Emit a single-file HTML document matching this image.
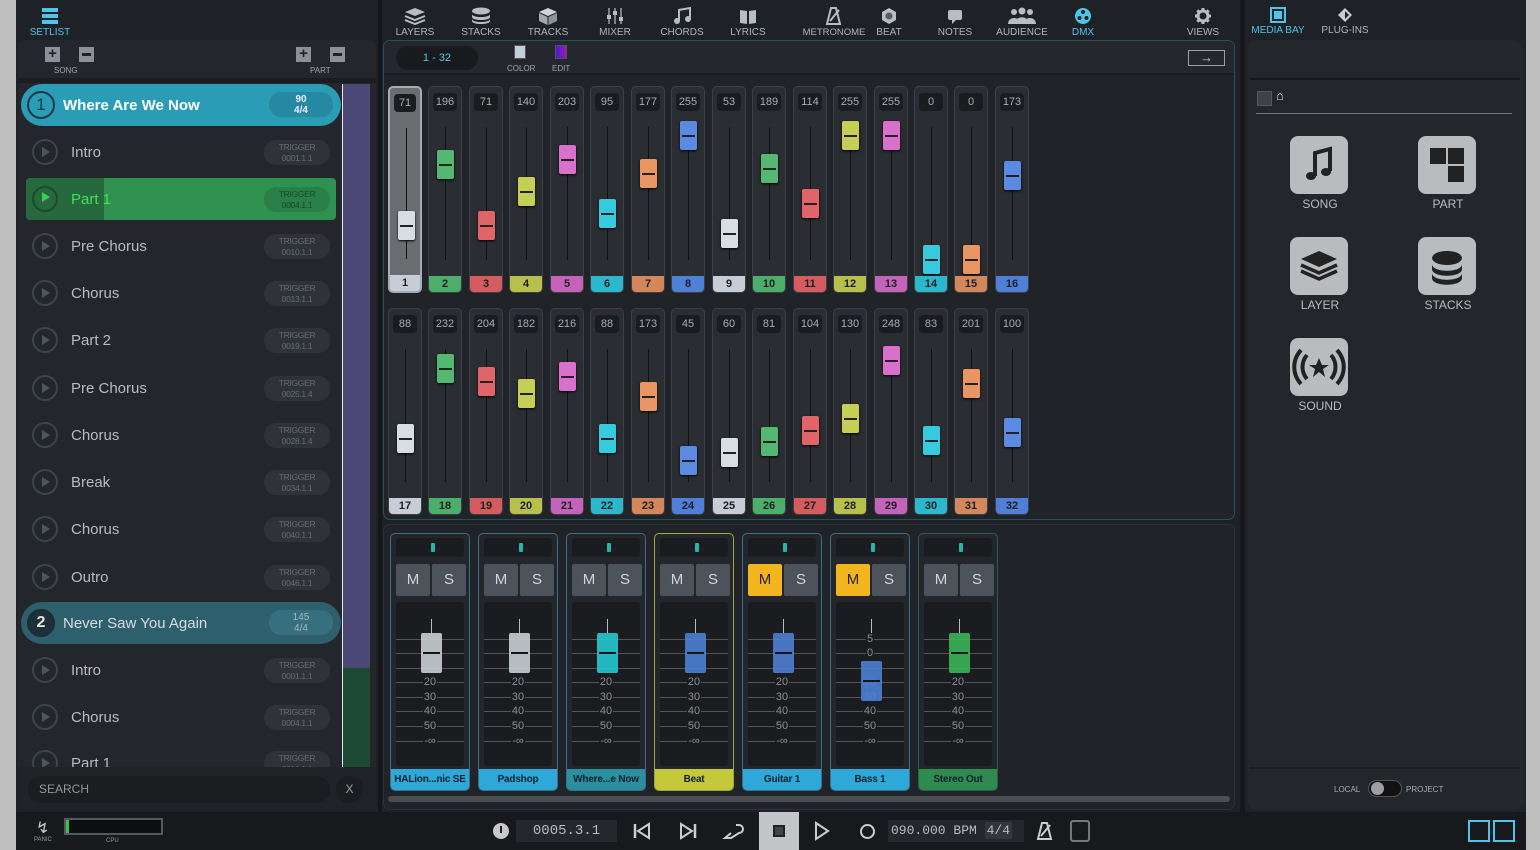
<!DOCTYPE html>
<html><head><meta charset="utf-8"><style>
*{box-sizing:border-box;margin:0;padding:0}
body{width:1540px;height:850px;overflow:hidden;background:#bfbfbf;font-family:"Liberation Sans",sans-serif;position:relative}
.a{position:absolute}
#app{left:16px;top:0;width:1510px;height:850px;background:#1e2125}
.tb{color:#aeb4ba;font-size:10px;text-align:center;width:60px}
.tb svg{display:block;margin:7px auto 2px}
.s{position:absolute;width:34px;height:207px;border-radius:5px;background:#2a2d31;border:1px solid #3d4147;overflow:hidden}
.s .v{position:absolute;left:4px;right:4px;top:6px;height:18px;background:#1a1c1f;border-radius:4px;color:#a8adb2;font-size:11px;text-align:center;line-height:18px}
.s .t{position:absolute;left:16px;width:1px;top:40px;bottom:32px;background:#111}
.s .h{position:absolute;left:8px;width:17px;height:29px;border-radius:2px;box-shadow:0 1px 2px #000}
.s .h:after{content:"";position:absolute;left:2px;right:2px;top:14px;height:2px;background:#222}
.s .l{position:absolute;left:0;right:0;bottom:0;height:16px;font-size:11px;font-weight:bold;color:#1d1f22;text-align:center;line-height:16px}
.ch{position:absolute;top:533px;width:80px;height:258px;border-radius:5px;border:1px solid #3a6e8a;background:#23272b;overflow:hidden}
.ch .mt{position:absolute;left:5px;right:5px;top:4px;height:19px;background:#1a1c1f;border-radius:3px}
.ch .mt:after{content:"";position:absolute;left:35px;top:5px;width:4px;height:9px;background:#27b3a6;border-radius:1px}
.ch .m,.ch .so{position:absolute;top:30px;width:34px;height:32px;background:#4c535b;color:#d0d4d8;font-size:15px;text-align:center;line-height:32px;border-radius:2px}
.ch .m{left:5px}.ch .so{left:41px}
.ch .fa{position:absolute;left:5px;right:5px;top:68px;height:164px;background:#1a1c1f;border-radius:3px}
.ch .tk{position:absolute;left:5px;right:5px;height:1px;background:#555}
.ch .n{position:absolute;left:10px;right:10px;height:12px;text-align:center;font-size:11px;color:#8a8f94;line-height:12px}
.ch .n span{background:#1a1c1f;padding:0 1px}
.ch .fh{position:absolute;left:30px;width:21px;height:40px;border-radius:2px;opacity:.9}
.ch .fh:after{content:"";position:absolute;left:2px;right:2px;top:19px;height:2px;background:#111}
.ch .st{position:absolute;left:40px;width:1px;height:14px;background:#bbb}
.ch .lb{position:absolute;left:0;right:0;bottom:0;height:21px;background:#2ea8d8;color:#10202a;font-size:10px;font-weight:bold;text-align:center;line-height:21px;white-space:nowrap;letter-spacing:-.2px}
.row{position:absolute;left:26px;width:310px;height:42px}
.row .pl{position:absolute;left:6px;top:8px;width:26px;height:26px;border:2px solid #3e444a;border-radius:50%}
.row .pl:after{content:"";position:absolute;left:8px;top:6px;border-left:8px solid #4e555c;border-top:5px solid transparent;border-bottom:5px solid transparent}
.row .nm{position:absolute;left:45px;top:13px;font-size:15px;color:#b7bcc1}
.row .tg{position:absolute;right:6px;top:9px;width:66px;height:25px;background:#2f3337;border-radius:12px;color:#666c72;font-size:8.5px;text-align:center;line-height:11px;padding-top:2px;letter-spacing:-.3px}
.mb{position:absolute;width:58px;height:58px;background:#b9bcbf;border-radius:8px}
.mbl{position:absolute;width:100px;text-align:center;color:#b8bcc0;font-size:12px}
</style></head><body>
<div id="app" class="a">
<div class="a" style="left:0;top:0;width:1510px;height:40px;background:#1e2125"></div>
<div class="a" style="left:362px;top:0;width:4px;height:812px;background:#141619"></div>
<div class="a" style="left:1224px;top:0;width:5px;height:812px;background:#141619"></div>

<div class="a tb" style="left:4px;top:0;color:#4fc3e8"><svg width="18" height="18" viewBox="0 0 18 18"><rect x="1" y="1" width="16" height="4" fill="#4fc3e8"/><rect x="1" y="7" width="16" height="4" fill="#4fc3e8"/><rect x="1" y="13" width="16" height="4" fill="#4fc3e8"/></svg>SETLIST</div>

<div class="a" style="left:2px;top:40px;width:358px;height:770px;background:#23262a;border-radius:6px"></div>
<div class="a" style="left:29px;top:47px;width:15px;height:15px;background:#8d9196;color:#222;font-weight:bold;font-size:15px;line-height:14px;text-align:center">+</div>
<div class="a" style="left:63px;top:47px;width:15px;height:15px;background:#8d9196"><div class="a" style="left:3px;top:6px;width:9px;height:3px;background:#222"></div></div>
<div class="a" style="left:38px;top:66px;font-size:8px;color:#a0a5aa">SONG</div>
<div class="a" style="left:280px;top:47px;width:15px;height:15px;background:#8d9196;color:#222;font-weight:bold;font-size:15px;line-height:14px;text-align:center">+</div>
<div class="a" style="left:314px;top:47px;width:15px;height:15px;background:#8d9196"><div class="a" style="left:3px;top:6px;width:9px;height:3px;background:#222"></div></div>
<div class="a" style="left:294px;top:66px;font-size:8px;color:#a0a5aa">PART</div>
<div class="a" style="left:2px;top:78px;width:358px;height:5px;background:#1b1d20"></div>
<div class="a" style="left:326px;top:84px;width:1px;height:683px;background:#e8e8e8"></div>
<div class="a" style="left:327px;top:84px;width:27px;height:584px;background:#4b4875"></div>
<div class="a" style="left:327px;top:668px;width:27px;height:99px;background:#1c4a33"></div>

<div class="a" style="left:5px;top:84px;width:320px;height:42px;background:#2a9cb6;border-radius:21px"></div>
<div class="a" style="left:11px;top:91px;width:28px;height:28px;border:2px solid #17394a;border-radius:50%;color:#17394a;font-size:17px;text-align:center;line-height:24px">1</div>
<div class="a" style="left:47px;top:97px;font-size:15px;font-weight:bold;color:#fff">Where Are We Now</div>
<div class="a" style="left:253px;top:92px;width:64px;height:25px;background:#2689a1;border-radius:12px;color:#eef;font-size:10px;text-align:center;line-height:11px;padding-top:2px;font-weight:bold">90<br>4/4</div>

<div class="row" style="left:10px;top:131px"><div class="pl"></div><div class="nm">Intro</div><div class="tg">TRIGGER<br>0001.1.1</div></div>
<div class="a" style="left:10px;top:178px;width:310px;height:42px;background:#2f9150;border-radius:4px"></div>
<div class="a" style="left:10px;top:178px;width:78px;height:42px;background:#26693d;border-radius:4px 0 0 4px"></div>
<div class="row" style="left:10px;top:178px"><div class="pl" style="border-color:#1d4a2c"></div><div class="a" style="left:16px;top:14px;border-left:8px solid #35d04f;border-top:5px solid transparent;border-bottom:5px solid transparent"></div><div class="nm" style="color:#3fe05a">Part 1</div><div class="tg" style="background:#2a7f47;color:#174a28">TRIGGER<br>0004.1.1</div></div>
<div class="row" style="left:10px;top:225px"><div class="pl"></div><div class="nm">Pre Chorus</div><div class="tg">TRIGGER<br>0010.1.1</div></div>
<div class="row" style="left:10px;top:272px"><div class="pl"></div><div class="nm">Chorus</div><div class="tg">TRIGGER<br>0013.1.1</div></div>
<div class="row" style="left:10px;top:319px"><div class="pl"></div><div class="nm">Part 2</div><div class="tg">TRIGGER<br>0019.1.1</div></div>
<div class="row" style="left:10px;top:367px"><div class="pl"></div><div class="nm">Pre Chorus</div><div class="tg">TRIGGER<br>0025.1.4</div></div>
<div class="row" style="left:10px;top:414px"><div class="pl"></div><div class="nm">Chorus</div><div class="tg">TRIGGER<br>0028.1.4</div></div>
<div class="row" style="left:10px;top:461px"><div class="pl"></div><div class="nm">Break</div><div class="tg">TRIGGER<br>0034.1.1</div></div>
<div class="row" style="left:10px;top:508px"><div class="pl"></div><div class="nm">Chorus</div><div class="tg">TRIGGER<br>0040.1.1</div></div>
<div class="row" style="left:10px;top:556px"><div class="pl"></div><div class="nm">Outro</div><div class="tg">TRIGGER<br>0046.1.1</div></div>
<div class="a" style="left:5px;top:602px;width:320px;height:42px;background:#2e5f6c;border-radius:21px"></div>
<div class="a" style="left:11px;top:609px;width:28px;height:28px;border:2px solid #1a2c33;background:#1f3038;border-radius:50%;color:#e6e6e6;font-size:16px;text-align:center;line-height:24px;font-weight:bold">2</div>
<div class="a" style="left:47px;top:615px;font-size:15px;color:#d6dde0">Never Saw You Again</div>
<div class="a" style="left:253px;top:610px;width:64px;height:25px;background:#36707e;border-radius:12px;color:#9fb8bf;font-size:10px;text-align:center;line-height:11px;padding-top:2px">145<br>4/4</div>
<div class="row" style="left:10px;top:649px"><div class="pl"></div><div class="nm">Intro</div><div class="tg">TRIGGER<br>0001.1.1</div></div>
<div class="row" style="left:10px;top:696px"><div class="pl"></div><div class="nm">Chorus</div><div class="tg">TRIGGER<br>0004.1.1</div></div>
<div class="a" style="left:10px;top:742px;width:316px;height:25px;overflow:hidden"><div class="row" style="left:0;top:0"><div class="pl"></div><div class="nm">Part 1</div><div class="tg">TRIGGER<br>0010.1.1</div></div></div>
<div class="a" style="left:2px;top:767px;width:358px;height:43px;background:#202327"></div>
<div class="a" style="left:12px;top:776px;width:302px;height:27px;background:#1b1d20;border-radius:13px;color:#8f959b;font-size:12px;line-height:27px;padding-left:11px">SEARCH</div>
<div class="a" style="left:320px;top:776px;width:27px;height:27px;background:#1b1d20;border-radius:13px;color:#9aa0a6;font-size:12px;line-height:27px;text-align:center">X</div>

<div class="a tb" style="left:369px;top:0"><svg width="22" height="18" viewBox="0 0 22 18"><path d="M11 1 21 5 11 9 1 5Z" fill="#b8bdc2"/><path d="M1 9l10 4 10-4M1 13l10 4 10-4" stroke="#b8bdc2" stroke-width="2" fill="none"/></svg>LAYERS</div>
<div class="a tb" style="left:435px;top:0"><svg width="20" height="18" viewBox="0 0 20 18"><ellipse cx="10" cy="4" rx="9" ry="3.5" fill="#b8bdc2"/><path d="M1 7c0 4 18 4 18 0v3c0 4-18 4-18 0zM1 12c0 4 18 4 18 0v2c0 4-18 4-18 0z" fill="#b8bdc2"/></svg>STACKS</div>
<div class="a tb" style="left:502px;top:0"><svg width="20" height="18" viewBox="0 0 20 18"><path d="M10 1 19 5 10 9 1 5Z" fill="#d0d3d6"/><path d="M1 6 9.5 10V18L1 14Z" fill="#a3a8ad"/><path d="M19 6 10.5 10V18L19 14Z" fill="#8d9297"/></svg>TRACKS</div>
<div class="a tb" style="left:569px;top:0"><svg width="20" height="18" viewBox="0 0 20 18"><path d="M4 1v16M10 1v16M16 1v16" stroke="#9ea3a8" stroke-width="1.5"/><rect x="2" y="8" width="4" height="4" fill="#b8bdc2"/><rect x="8" y="4" width="4" height="4" fill="#b8bdc2"/><rect x="14" y="10" width="4" height="4" fill="#b8bdc2"/></svg>MIXER</div>
<div class="a tb" style="left:636px;top:0"><svg width="20" height="18" viewBox="0 0 20 18"><path d="M7 14V3l11-2v11" stroke="#b8bdc2" stroke-width="2" fill="none"/><circle cx="5" cy="14" r="3" fill="#b8bdc2"/><circle cx="16" cy="12" r="3" fill="#b8bdc2"/></svg>CHORDS</div>
<div class="a tb" style="left:702px;top:0"><svg width="20" height="18" viewBox="0 0 20 18"><path d="M2 3l7 1v13l-7-1zM18 3l-7 1v13l7-1z" fill="#b8bdc2"/></svg>LYRICS</div>
<div class="a tb" style="left:776px;top:0;width:84px;font-size:9.5px"><svg width="20" height="18" viewBox="0 0 20 18"><path d="M7 1h5l4 16H3z" stroke="#b8bdc2" stroke-width="2" fill="none"/><path d="M6 14 15 3" stroke="#b8bdc2" stroke-width="2"/></svg>METRONOME</div>
<div class="a tb" style="left:843px;top:0"><svg width="20" height="18" viewBox="0 0 20 18"><path d="M10 1 17 5v8l-7 4-7-4V5z" fill="#b8bdc2"/><circle cx="10" cy="9" r="3.5" fill="#5a5f64"/></svg>BEAT</div>
<div class="a tb" style="left:909px;top:0"><svg width="20" height="18" viewBox="0 0 20 18"><rect x="3" y="3" width="14" height="10" rx="2" fill="#b8bdc2"/><path d="M7 13v4l4-4z" fill="#b8bdc2"/></svg>NOTES</div>
<div class="a tb" style="left:976px;top:0"><svg width="32" height="18" viewBox="0 0 32 18"><circle cx="8" cy="5" r="3" fill="#b8bdc2"/><circle cx="16" cy="4" r="3.5" fill="#b8bdc2"/><circle cx="24" cy="5" r="3" fill="#b8bdc2"/><path d="M2 17c0-8 12-8 12 0zM9 17c0-9 14-9 14 0zM18 17c0-8 12-8 12 0z" fill="#b8bdc2"/></svg>AUDIENCE</div>
<div class="a tb" style="left:1037px;top:0;color:#4fc3e8"><svg width="18" height="18" viewBox="0 0 18 18"><circle cx="9" cy="9" r="8" fill="#4fc3e8"/><circle cx="9" cy="5" r="2" fill="#1e2125"/><circle cx="5.5" cy="11" r="2" fill="#1e2125"/><circle cx="12.5" cy="11" r="2" fill="#1e2125"/></svg>DMX</div>
<div class="a tb" style="left:1157px;top:0"><svg width="18" height="18" viewBox="0 0 18 18"><circle cx="9" cy="9" r="5" stroke="#b8bdc2" stroke-width="3" fill="none"/><path d="M9 1v4M9 13v4M1 9h4M13 9h4M3.3 3.3l2.8 2.8M11.9 11.9l2.8 2.8M3.3 14.7l2.8-2.8M11.9 6.1l2.8-2.8" stroke="#b8bdc2" stroke-width="3"/></svg>VIEWS</div>

<div class="a" style="left:367px;top:40px;width:852px;height:480px;border:1px solid #25515e;border-radius:7px;background:#202327"></div>
<div class="a" style="left:368px;top:41px;width:850px;height:34px;background:#24272b;border-radius:7px 7px 0 0;border-bottom:2px solid #1a1c1f"></div>
<div class="a" style="left:380px;top:46px;width:82px;height:24px;background:#181a1d;border-radius:12px;color:#4fc3e8;font-size:11px;text-align:center;line-height:24px">1 - 32</div>
<div class="a" style="left:498px;top:45px;width:12px;height:14px;background:#c2d0dc;border:1px solid #555"></div>
<div class="a" style="left:491px;top:64px;font-size:8px;color:#a0a5aa">COLOR</div>
<div class="a" style="left:539px;top:45px;width:12px;height:14px;background:linear-gradient(90deg,#4a1ad0,#9b18b8);border:1px solid #555"></div>
<div class="a" style="left:536px;top:64px;font-size:8px;color:#a0a5aa">EDIT</div>
<div class="a" style="left:1172px;top:50px;width:37px;height:16px;border:1px solid #9aa0a6;color:#d0d0d0;font-size:13px;text-align:center;line-height:13px">&#8594;</div>

<div class="s" style="left:372px;top:86px;background:#6a6c6f;border:2px solid #a8acb0"><div class="v">71</div><div class="t"></div><div class="h" style="top:123px;background:#d6dde3"></div><div class="l" style="background:#c5ced6">1</div></div>
<div class="s" style="left:412px;top:86px"><div class="v">196</div><div class="t"></div><div class="h" style="top:63px;background:#54b872"></div><div class="l" style="background:#4dae6b">2</div></div>
<div class="s" style="left:453px;top:86px"><div class="v">71</div><div class="t"></div><div class="h" style="top:124px;background:#e06468"></div><div class="l" style="background:#d45b5e">3</div></div>
<div class="s" style="left:493px;top:86px"><div class="v">140</div><div class="t"></div><div class="h" style="top:90px;background:#c5cf55"></div><div class="l" style="background:#b7c04c">4</div></div>
<div class="s" style="left:534px;top:86px"><div class="v">203</div><div class="t"></div><div class="h" style="top:58px;background:#d970cb"></div><div class="l" style="background:#c463b9">5</div></div>
<div class="s" style="left:574px;top:86px"><div class="v">95</div><div class="t"></div><div class="h" style="top:112px;background:#35cbdc"></div><div class="l" style="background:#2bb8cc">6</div></div>
<div class="s" style="left:615px;top:86px"><div class="v">177</div><div class="t"></div><div class="h" style="top:72px;background:#e99463"></div><div class="l" style="background:#d4875a">7</div></div>
<div class="s" style="left:655px;top:86px"><div class="v">255</div><div class="t"></div><div class="h" style="top:34px;background:#5b8ae2"></div><div class="l" style="background:#4f7fd6">8</div></div>
<div class="s" style="left:696px;top:86px"><div class="v">53</div><div class="t"></div><div class="h" style="top:132px;background:#d6dde3"></div><div class="l" style="background:#c5ced6">9</div></div>
<div class="s" style="left:736px;top:86px"><div class="v">189</div><div class="t"></div><div class="h" style="top:67px;background:#54b872"></div><div class="l" style="background:#4dae6b">10</div></div>
<div class="s" style="left:777px;top:86px"><div class="v">114</div><div class="t"></div><div class="h" style="top:102px;background:#e06468"></div><div class="l" style="background:#d45b5e">11</div></div>
<div class="s" style="left:817px;top:86px"><div class="v">255</div><div class="t"></div><div class="h" style="top:34px;background:#c5cf55"></div><div class="l" style="background:#b7c04c">12</div></div>
<div class="s" style="left:858px;top:86px"><div class="v">255</div><div class="t"></div><div class="h" style="top:34px;background:#d970cb"></div><div class="l" style="background:#c463b9">13</div></div>
<div class="s" style="left:898px;top:86px"><div class="v">0</div><div class="t"></div><div class="h" style="top:158px;background:#35cbdc"></div><div class="l" style="background:#2bb8cc">14</div></div>
<div class="s" style="left:938px;top:86px"><div class="v">0</div><div class="t"></div><div class="h" style="top:158px;background:#e99463"></div><div class="l" style="background:#d4875a">15</div></div>
<div class="s" style="left:979px;top:86px"><div class="v">173</div><div class="t"></div><div class="h" style="top:74px;background:#5b8ae2"></div><div class="l" style="background:#4f7fd6">16</div></div>
<div class="s" style="left:372px;top:308px"><div class="v">88</div><div class="t"></div><div class="h" style="top:115px;background:#d6dde3"></div><div class="l" style="background:#c5ced6">17</div></div>
<div class="s" style="left:412px;top:308px"><div class="v">232</div><div class="t"></div><div class="h" style="top:45px;background:#54b872"></div><div class="l" style="background:#4dae6b">18</div></div>
<div class="s" style="left:453px;top:308px"><div class="v">204</div><div class="t"></div><div class="h" style="top:58px;background:#e06468"></div><div class="l" style="background:#d45b5e">19</div></div>
<div class="s" style="left:493px;top:308px"><div class="v">182</div><div class="t"></div><div class="h" style="top:70px;background:#c5cf55"></div><div class="l" style="background:#b7c04c">20</div></div>
<div class="s" style="left:534px;top:308px"><div class="v">216</div><div class="t"></div><div class="h" style="top:53px;background:#d970cb"></div><div class="l" style="background:#c463b9">21</div></div>
<div class="s" style="left:574px;top:308px"><div class="v">88</div><div class="t"></div><div class="h" style="top:115px;background:#35cbdc"></div><div class="l" style="background:#2bb8cc">22</div></div>
<div class="s" style="left:615px;top:308px"><div class="v">173</div><div class="t"></div><div class="h" style="top:73px;background:#e99463"></div><div class="l" style="background:#d4875a">23</div></div>
<div class="s" style="left:655px;top:308px"><div class="v">45</div><div class="t"></div><div class="h" style="top:137px;background:#5b8ae2"></div><div class="l" style="background:#4f7fd6">24</div></div>
<div class="s" style="left:696px;top:308px"><div class="v">60</div><div class="t"></div><div class="h" style="top:129px;background:#d6dde3"></div><div class="l" style="background:#c5ced6">25</div></div>
<div class="s" style="left:736px;top:308px"><div class="v">81</div><div class="t"></div><div class="h" style="top:118px;background:#54b872"></div><div class="l" style="background:#4dae6b">26</div></div>
<div class="s" style="left:777px;top:308px"><div class="v">104</div><div class="t"></div><div class="h" style="top:107px;background:#e06468"></div><div class="l" style="background:#d45b5e">27</div></div>
<div class="s" style="left:817px;top:308px"><div class="v">130</div><div class="t"></div><div class="h" style="top:95px;background:#c5cf55"></div><div class="l" style="background:#b7c04c">28</div></div>
<div class="s" style="left:858px;top:308px"><div class="v">248</div><div class="t"></div><div class="h" style="top:37px;background:#d970cb"></div><div class="l" style="background:#c463b9">29</div></div>
<div class="s" style="left:898px;top:308px"><div class="v">83</div><div class="t"></div><div class="h" style="top:117px;background:#35cbdc"></div><div class="l" style="background:#2bb8cc">30</div></div>
<div class="s" style="left:938px;top:308px"><div class="v">201</div><div class="t"></div><div class="h" style="top:60px;background:#e99463"></div><div class="l" style="background:#d4875a">31</div></div>
<div class="s" style="left:979px;top:308px"><div class="v">100</div><div class="t"></div><div class="h" style="top:109px;background:#5b8ae2"></div><div class="l" style="background:#4f7fd6">32</div></div>

<div class="a" style="left:367px;top:524px;width:852px;height:286px;border:1px solid #2d3237;border-radius:7px;background:#202327"></div>
<div class="a" style="left:372px;top:796px;width:842px;height:6px;background:#4a4e53;border-radius:3px"></div>

<div class="ch" style="left:374px"><div class="mt"></div><div class="m">M</div><div class="so">S</div><div class="fa"></div>
<div class="tk" style="top:105px"></div><div class="tk" style="top:119px"></div><div class="tk" style="top:134px"></div><div class="tk" style="top:148px"></div><div class="tk" style="top:163px"></div><div class="tk" style="top:177px"></div><div class="tk" style="top:192px"></div><div class="tk" style="top:207px"></div>
<div class="n" style="top:142px"><span>20</span></div><div class="n" style="top:157px"><span>30</span></div><div class="n" style="top:171px"><span>40</span></div><div class="n" style="top:186px"><span>50</span></div><div class="n" style="top:201px"><span>-∞</span></div>
<div class="st" style="top:85px"></div><div class="fh" style="top:99px;background:#c9ced2"></div><div class="lb">HALion...nic SE</div></div>
<div class="ch" style="left:462px"><div class="mt"></div><div class="m">M</div><div class="so">S</div><div class="fa"></div>
<div class="tk" style="top:105px"></div><div class="tk" style="top:119px"></div><div class="tk" style="top:134px"></div><div class="tk" style="top:148px"></div><div class="tk" style="top:163px"></div><div class="tk" style="top:177px"></div><div class="tk" style="top:192px"></div><div class="tk" style="top:207px"></div>
<div class="n" style="top:142px"><span>20</span></div><div class="n" style="top:157px"><span>30</span></div><div class="n" style="top:171px"><span>40</span></div><div class="n" style="top:186px"><span>50</span></div><div class="n" style="top:201px"><span>-∞</span></div>
<div class="st" style="top:85px"></div><div class="fh" style="top:99px;background:#c9ced2"></div><div class="lb">Padshop</div></div>
<div class="ch" style="left:550px"><div class="mt"></div><div class="m">M</div><div class="so">S</div><div class="fa"></div>
<div class="tk" style="top:105px"></div><div class="tk" style="top:119px"></div><div class="tk" style="top:134px"></div><div class="tk" style="top:148px"></div><div class="tk" style="top:163px"></div><div class="tk" style="top:177px"></div><div class="tk" style="top:192px"></div><div class="tk" style="top:207px"></div>
<div class="n" style="top:142px"><span>20</span></div><div class="n" style="top:157px"><span>30</span></div><div class="n" style="top:171px"><span>40</span></div><div class="n" style="top:186px"><span>50</span></div><div class="n" style="top:201px"><span>-∞</span></div>
<div class="st" style="top:85px"></div><div class="fh" style="top:99px;background:#25c9cf"></div><div class="lb" style="background:#2b8fa2">Where...e Now</div></div>
<div class="ch" style="left:638px;border-color:#a4a83a"><div class="mt"></div><div class="m">M</div><div class="so">S</div><div class="fa"></div>
<div class="tk" style="top:105px"></div><div class="tk" style="top:119px"></div><div class="tk" style="top:134px"></div><div class="tk" style="top:148px"></div><div class="tk" style="top:163px"></div><div class="tk" style="top:177px"></div><div class="tk" style="top:192px"></div><div class="tk" style="top:207px"></div>
<div class="n" style="top:142px"><span>20</span></div><div class="n" style="top:157px"><span>30</span></div><div class="n" style="top:171px"><span>40</span></div><div class="n" style="top:186px"><span>50</span></div><div class="n" style="top:201px"><span>-∞</span></div>
<div class="st" style="top:85px"></div><div class="fh" style="top:99px;background:#4d7fd4"></div><div class="lb" style="background:#c6c83c">Beat</div></div>
<div class="ch" style="left:726px"><div class="mt"></div><div class="m" style="background:#f2b51e;color:#222">M</div><div class="so">S</div><div class="fa"></div>
<div class="tk" style="top:105px"></div><div class="tk" style="top:119px"></div><div class="tk" style="top:134px"></div><div class="tk" style="top:148px"></div><div class="tk" style="top:163px"></div><div class="tk" style="top:177px"></div><div class="tk" style="top:192px"></div><div class="tk" style="top:207px"></div>
<div class="n" style="top:142px"><span>20</span></div><div class="n" style="top:157px"><span>30</span></div><div class="n" style="top:171px"><span>40</span></div><div class="n" style="top:186px"><span>50</span></div><div class="n" style="top:201px"><span>-∞</span></div>
<div class="st" style="top:85px"></div><div class="fh" style="top:99px;background:#4d7fd4"></div><div class="lb">Guitar 1</div></div>
<div class="ch" style="left:814px"><div class="mt"></div><div class="m" style="background:#f2b51e;color:#222">M</div><div class="so">S</div><div class="fa"></div>
<div class="tk" style="top:105px"></div><div class="tk" style="top:119px"></div><div class="tk" style="top:134px"></div><div class="tk" style="top:148px"></div><div class="tk" style="top:163px"></div><div class="tk" style="top:177px"></div><div class="tk" style="top:192px"></div><div class="tk" style="top:207px"></div>
<div class="n" style="top:99px"><span>5</span></div><div class="n" style="top:113px"><span>0</span></div><div class="n" style="top:142px"><span>20</span></div><div class="n" style="top:157px"><span>30</span></div><div class="n" style="top:171px"><span>40</span></div><div class="n" style="top:186px"><span>50</span></div><div class="n" style="top:201px"><span>-∞</span></div>
<div class="st" style="top:85px"></div><div class="fh" style="top:127px;background:#4d7fd4"></div><div class="lb">Bass 1</div></div>
<div class="ch" style="left:902px;border-color:#2f5e48"><div class="mt"></div><div class="m">M</div><div class="so">S</div><div class="fa"></div>
<div class="tk" style="top:105px"></div><div class="tk" style="top:119px"></div><div class="tk" style="top:134px"></div><div class="tk" style="top:148px"></div><div class="tk" style="top:163px"></div><div class="tk" style="top:177px"></div><div class="tk" style="top:192px"></div><div class="tk" style="top:207px"></div>
<div class="n" style="top:142px"><span>20</span></div><div class="n" style="top:157px"><span>30</span></div><div class="n" style="top:171px"><span>40</span></div><div class="n" style="top:186px"><span>50</span></div><div class="n" style="top:201px"><span>-∞</span></div>
<div class="st" style="top:85px"></div><div class="fh" style="top:99px;background:#3ab457"></div><div class="lb" style="background:#2f8a4f">Stereo Out</div></div>

<div class="a tb" style="left:1232px;top:0;color:#4fc3e8"><svg width="16" height="16" viewBox="0 0 16 16"><rect x="1" y="1" width="14" height="14" stroke="#4fc3e8" stroke-width="2" fill="none"/><rect x="4" y="4" width="8" height="8" fill="#4fc3e8"/></svg>MEDIA BAY</div>
<div class="a tb" style="left:1299px;top:0"><svg width="16" height="16" viewBox="0 0 16 16"><path d="M8 1 15 8 8 15 1 8Z" fill="#c8ccd0"/><path d="M8 4 12 8 8 12Z" fill="#1e2125"/></svg>PLUG-INS</div>
<div class="a" style="left:1232px;top:40px;width:274px;height:770px;border-radius:7px;background:#23262a"></div>
<div class="a" style="left:1234px;top:78px;width:270px;height:2px;background:#17191c"></div>
<div class="a" style="left:1241px;top:91px;width:15px;height:15px;background:#3e4247;border:1px solid #55595e"></div>
<div class="a" style="left:1260px;top:88px;color:#e0e0e0;font-size:13px">&#8962;</div>
<div class="a" style="left:1240px;top:113px;width:256px;height:1px;background:#777"></div>
<div class="mb" style="left:1274px;top:136px"><svg width="58" height="58" viewBox="0 0 58 58"><path d="M25 40V17l15-4v22" stroke="#222" stroke-width="4" fill="none"/><ellipse cx="21" cy="40" rx="5" ry="4" fill="#222"/><ellipse cx="36" cy="36" rx="5" ry="4" fill="#222"/></svg></div>
<div class="mbl" style="left:1254px;top:197px">SONG</div>
<div class="mb" style="left:1402px;top:136px"><svg width="58" height="58" viewBox="0 0 58 58"><rect x="12" y="12" width="16" height="16" fill="#222"/><rect x="30" y="12" width="16" height="16" fill="#222"/><rect x="30" y="30" width="16" height="16" fill="#222"/></svg></div>
<div class="mbl" style="left:1382px;top:197px">PART</div>
<div class="mb" style="left:1274px;top:237px"><svg width="58" height="58" viewBox="0 0 58 58"><path d="M29 14 47 22 29 30 11 22Z" fill="#222"/><path d="M11 28l18 8 18-8M11 34l18 8 18-8" stroke="#222" stroke-width="3.5" fill="none"/></svg></div>
<div class="mbl" style="left:1254px;top:298px">LAYER</div>
<div class="mb" style="left:1402px;top:237px"><svg width="58" height="58" viewBox="0 0 58 58"><ellipse cx="29" cy="21" rx="15" ry="7" fill="#222"/><path d="M14 27c0 9 30 9 30 0v5c0 9-30 9-30 0zM14 36c0 9 30 9 30 0v5c0 9-30 9-30 0z" fill="#222"/></svg></div>
<div class="mbl" style="left:1382px;top:298px">STACKS</div>
<div class="mb" style="left:1274px;top:338px"><svg width="58" height="58" viewBox="0 0 58 58"><path d="M29 20l3 7h7l-6 4 2 8-6-5-6 5 2-8-6-4h7z" fill="#222"/><path d="M17 17c-6 7-6 17 0 24M41 17c6 7 6 17 0 24M11 12c-9 10-9 24 0 34M47 12c9 10 9 24 0 34" stroke="#222" stroke-width="4" fill="none"/></svg></div>
<div class="mbl" style="left:1254px;top:399px">SOUND</div>
<div class="a" style="left:1234px;top:767px;width:270px;height:2px;background:#1a1c1f"></div>
<div class="a" style="left:1318px;top:785px;font-size:8px;color:#a8adb2">LOCAL</div>
<div class="a" style="left:1352px;top:780px;width:34px;height:17px;border-radius:9px;background:#111;border:1px solid #555"><div class="a" style="left:2px;top:1px;width:13px;height:13px;border-radius:50%;background:#9ca0a4"></div></div>
<div class="a" style="left:1390px;top:785px;font-size:8px;color:#a8adb2">PROJECT</div>

<div class="a" style="left:0;top:812px;width:1510px;height:38px;background:#17191c"></div>
<div class="a" style="left:20px;top:818px;color:#c8c8c8;font-size:16px">&#8623;</div>
<div class="a" style="left:18px;top:837px;font-size:6px;color:#999">PANIC</div>
<div class="a" style="left:48px;top:818px;width:99px;height:17px;border:2px solid #55595e;background:#0e0f11"><div class="a" style="left:0;top:0;width:3px;height:13px;background:#3fbf4a"></div></div>
<div class="a" style="left:90px;top:838px;font-size:6px;color:#999">CPU</div>
<div class="a" style="left:477px;top:823px;width:16px;height:16px;border-radius:50%;background:#c8c8c8"><div class="a" style="left:7px;top:3px;width:2px;height:7px;background:#222"></div></div>
<div class="a" style="left:500px;top:820px;width:101px;height:22px;background:#24272b;color:#b8bcc0;font-family:'Liberation Mono',monospace;font-size:14px;line-height:22px;text-align:center">0005.3.1</div>
<svg class="a" style="left:616px;top:822px" width="20" height="18" viewBox="0 0 20 18"><path d="M3 2v14" stroke="#ccc" stroke-width="2.5"/><path d="M17 2 6 9l11 7z" stroke="#ccc" stroke-width="2" fill="none"/></svg>
<svg class="a" style="left:662px;top:822px" width="20" height="18" viewBox="0 0 20 18"><path d="M17 2v14" stroke="#ccc" stroke-width="2.5"/><path d="M3 2l11 7-11 7z" stroke="#ccc" stroke-width="2" fill="none"/></svg>
<svg class="a" style="left:706px;top:821px" width="22" height="20" viewBox="0 0 22 20"><path d="M14 4h3a4 4 0 0 1 0 8l-8 5H3l6-5" stroke="#ccc" stroke-width="2" fill="none"/></svg>
<div class="a" style="left:743px;top:812px;width:40px;height:38px;background:#c3c6c9"><div class="a" style="left:14px;top:13px;width:12px;height:12px;border:2px solid #222;background:#444"></div></div>
<svg class="a" style="left:797px;top:821px" width="18" height="20" viewBox="0 0 18 20"><path d="M3 2l12 8-12 8z" stroke="#ccc" stroke-width="2" fill="none"/></svg>
<div class="a" style="left:844px;top:824px;width:15px;height:15px;border-radius:50%;border:2.5px solid #ccc"></div>
<div class="a" style="left:872px;top:820px;width:136px;height:22px;background:#24272b;color:#b8bcc0;font-family:'Liberation Mono',monospace;font-size:13px;line-height:22px;padding-left:3px;white-space:nowrap">090.000 BPM <span style="background:#33373b;padding:1px 2px">4/4</span></div>
<svg class="a" style="left:1020px;top:821px" width="18" height="20" viewBox="0 0 18 20"><path d="M6 2h5l4 16H2z" stroke="#ccc" stroke-width="2" fill="none"/><path d="M5 15 14 4" stroke="#ccc" stroke-width="2"/></svg>
<div class="a" style="left:1054px;top:820px;width:20px;height:22px;border:2px solid #777;border-radius:3px"></div>
<div class="a" style="left:1452px;top:820px;width:22px;height:22px;border:2px solid #4fc3e8"></div>
<div class="a" style="left:1477px;top:820px;width:22px;height:22px;border:2px solid #4fc3e8"></div>
</div>
</body></html>
